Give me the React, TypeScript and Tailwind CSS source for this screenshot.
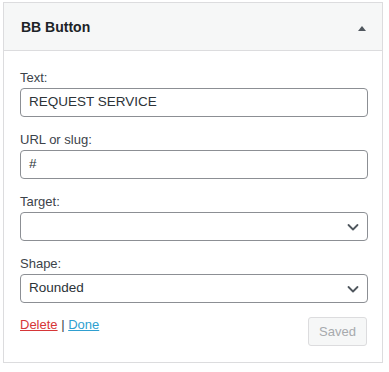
import React from "react";

const Chevron = () => (
  <svg width="16" height="16" viewBox="0 0 16 16" className="text-[#50575e]">
    <path d="M3.5 6l4.5 4.5L12.5 6" fill="none" stroke="currentColor" strokeWidth="1.8" strokeLinecap="round" strokeLinejoin="round" />
  </svg>
);

const Field = ({ label, children }: { label: string; children: React.ReactNode }) => (
  <div className="flex flex-col">
    <label className="text-[13px] leading-[18px] text-[#3c434a] mb-[1px]">{label}</label>
    {children}
  </div>
);

const TextInput = ({ value }: { value: string }) => (
  <div className="h-[29px] border border-[#8c8f94] rounded-[4px] bg-white flex items-center px-[8px] text-[13.5px] text-[#2c3338]">
    {value}
  </div>
);

const Select = ({ value }: { value?: string }) => (
  <div className="h-[29px] border border-[#8c8f94] rounded-[4px] bg-white flex items-center justify-between pl-[8px] pr-[6px] text-[13.5px] text-[#2c3338]">
    <span>{value}</span>
    <Chevron />
  </div>
);

export default function App() {
  return (
    <div className="w-[389px] h-[372px] bg-white pt-[2px] pl-[3px]" style={{ fontFamily: '"Liberation Sans", Arial, sans-serif' }}>
      <div className="w-[380px] h-[361px] border border-[#dcdcde] bg-white flex flex-col">
        <div className="h-[48px] bg-[#f6f7f7] border-b border-[#dcdcde] flex items-center justify-between pl-[17px] pr-[15px] pt-[2px]">
          <h3 className="text-[14px] font-bold text-[#1d2327]">BB Button</h3>
          <span className="w-0 h-0 border-l-[4px] border-r-[4px] border-b-[5px] border-l-transparent border-r-transparent border-b-[#50575e] mt-[2px] mr-[1px]" />
        </div>
        <div className="flex flex-col gap-[14px] pl-[16px] pr-[14px] pt-[18px]">
          <Field label="Text:"><TextInput value="REQUEST SERVICE" /></Field>
          <Field label="URL or slug:"><TextInput value="#" /></Field>
          <Field label="Target:"><Select /></Field>
          <Field label="Shape:"><Select value="Rounded" /></Field>
        </div>
        <div className="flex items-start justify-between pl-[16px] pr-[15px] pt-[13px]">
          <div className="text-[13px] text-[#3c434a] leading-[18px]">
            <a className="text-[#d63638] underline">Delete</a> | <a className="text-[#2f9fd0] underline">Done</a>
          </div>
          <button className="mt-[1px] h-[29px] w-[59px] rounded-[3px] border border-[#dcdcde] bg-[#f6f7f7] text-[13px] text-[#a7aaad]">Saved</button>
        </div>
      </div>
    </div>
  );
}
